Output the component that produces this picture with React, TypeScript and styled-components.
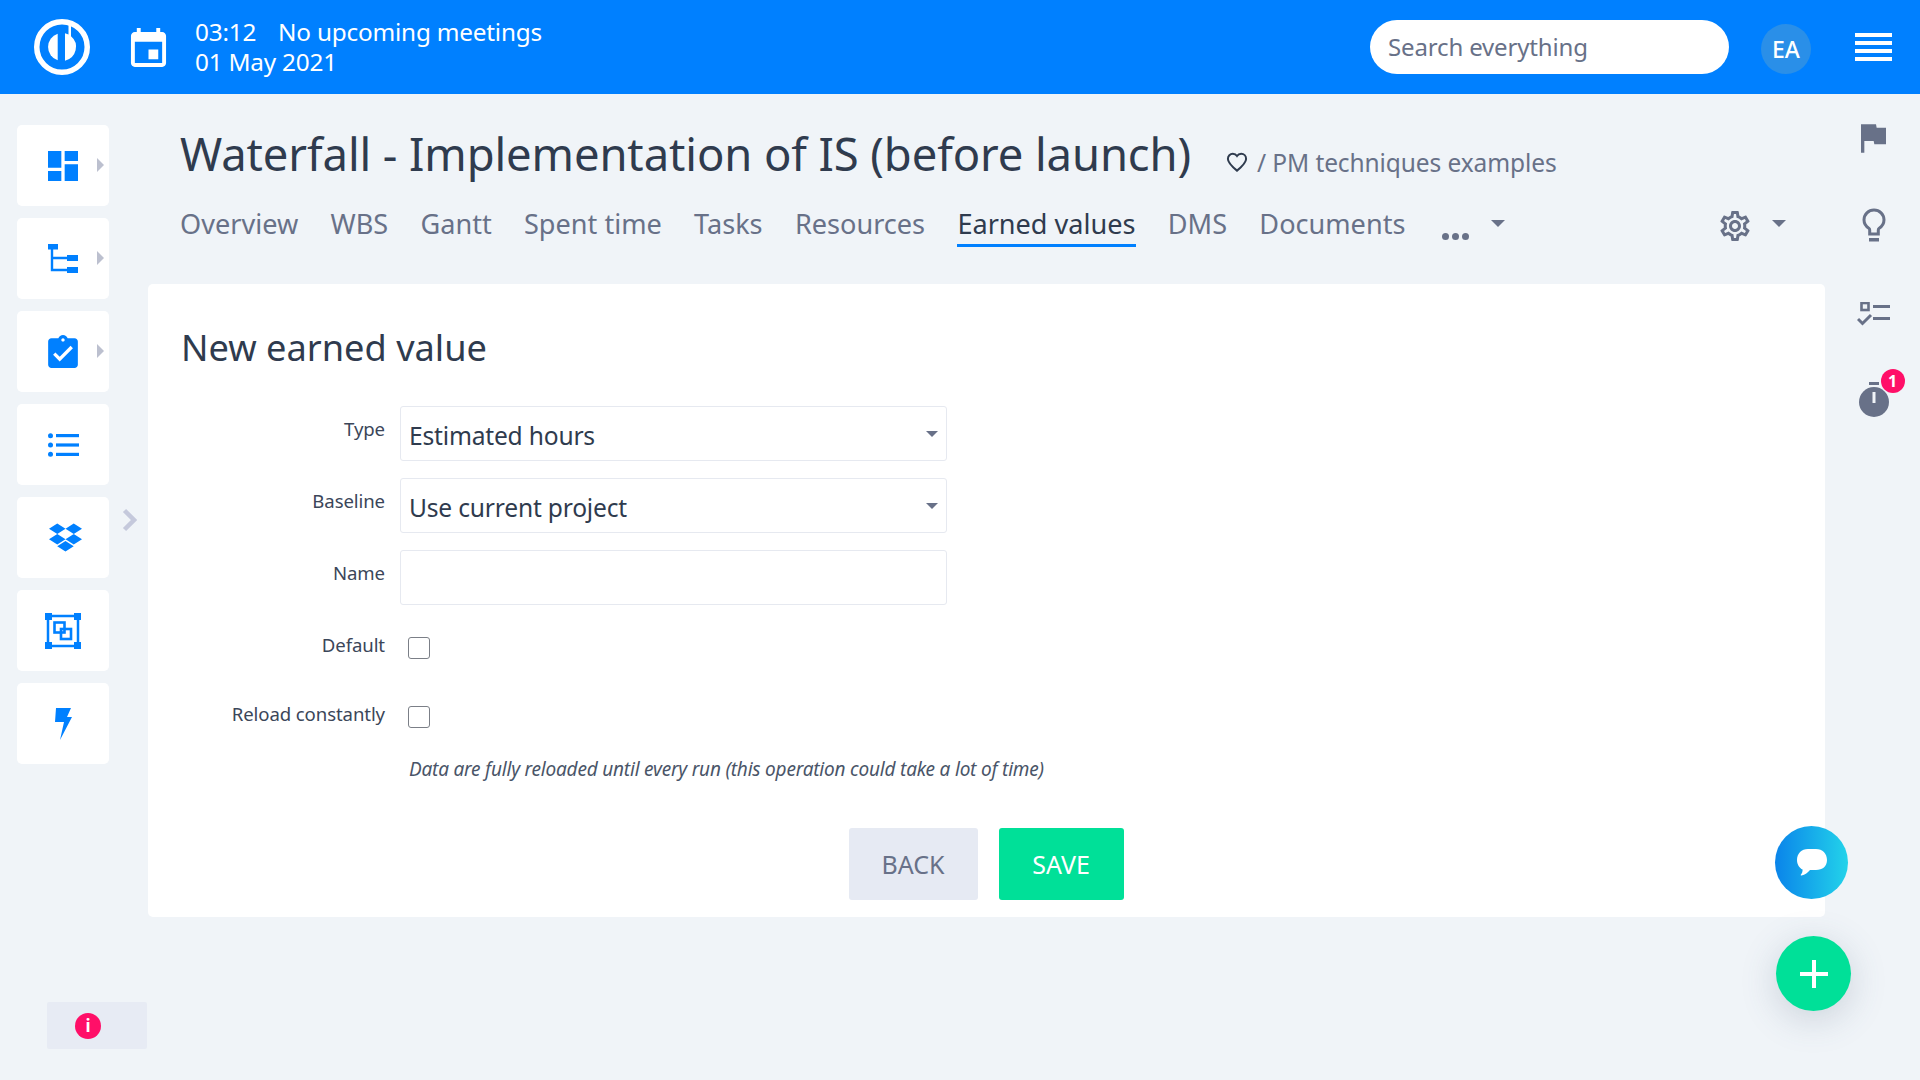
import React from "react";
import styled, { createGlobalStyle } from "styled-components";
import { FaDropbox } from "react-icons/fa";

const BLUE = "#0080ff";
const GREY = "#687188";
const INK = "#2f3b4e";
const GREEN = "#00e098";
const PINK = "#ff0f68";
const FONT = `"Noto Sans", "Open Sans", sans-serif`;

const GlobalStyle = createGlobalStyle`
  html, body {
    margin: 0;
    padding: 0;
    background: #f0f4f8;
    font-family: ${FONT};
  }
  * { box-sizing: border-box; }
`;

const Page = styled.div`
  position: relative;
  width: 1920px;
  height: 1080px;
  overflow: hidden;
  background: #f0f4f8;
`;

/* top bar */
const TopBar = styled.header`
  height: 94px;
  background: ${BLUE};
  display: flex;
  align-items: center;
  padding: 0 28px 0 34px;
  color: #fff;
`;

const Logo = styled.svg`
  width: 56px;
  height: 56px;
  flex: none;
`;

const CalendarIcon = styled.svg`
  width: 37px;
  height: 39px;
  margin-left: 40px;
  flex: none;
  fill: #fff;
`;

const Clock = styled.div`
  margin-left: 28px;
  font-size: 24.3px;
  line-height: 30px;
  letter-spacing: -0.2px;
`;

const ClockLine = styled.div`
  display: flex;
  gap: 22px;
`;

const SearchBox = styled.div`
  width: 359px;
  height: 54px;
  margin-left: auto;
  border-radius: 27px;
  background: #fff;
  display: flex;
  align-items: center;
  padding: 0 0 2px 18px;
  font-size: 24px;
  letter-spacing: -0.15px;
  color: ${GREY};
`;

const Avatar = styled.div`
  width: 50px;
  height: 50px;
  margin: 4px 0 0 32px;
  border-radius: 50%;
  background: #2a8fe8;
  display: flex;
  align-items: center;
  justify-content: center;
  font-size: 23px;
  font-weight: 500;
`;

const Burger = styled.div`
  width: 37px;
  height: 28px;
  margin-left: 44px;
  display: flex;
  flex-direction: column;
  justify-content: space-between;
`;

const BurgerLine = styled.span`
  height: 4px;
  background: #fff;
`;

/* body */
const Body = styled.div`
  display: flex;
  height: 986px;
`;

const SideBar = styled.nav`
  width: 148px;
  flex: none;
  padding: 31px 0 0 17px;
  display: flex;
  flex-direction: column;
  gap: 12px;
`;

const SideCard = styled.div`
  position: relative;
  width: 92px;
  height: 81px;
  border-radius: 5px;
  background: #fff;
  display: flex;
  align-items: center;
  justify-content: center;
  padding-left: ${(p) => p.$shift ?? 0}px;
  color: ${BLUE};
  fill: ${BLUE};
`;

const SideArrow = styled.span`
  position: absolute;
  right: 5px;
  top: 33px;
  width: 0;
  height: 0;
  border-top: 7.5px solid transparent;
  border-bottom: 7.5px solid transparent;
  border-left: 7px solid #bcc0cf;
`;

const Collapse = styled.svg`
  position: absolute;
  left: 122px;
  top: 508px;
  width: 15px;
  height: 24px;
`;

const InfoBadge = styled.div`
  margin-top: auto;
  margin-bottom: 31px;
  margin-left: 30px;
  width: 100px;
  height: 47px;
  background: #e7ebf4;
  border-radius: 2px;
  display: flex;
  align-items: center;
  padding-left: 28px;
`;

const InfoDot = styled.span`
  width: 26px;
  height: 26px;
  border-radius: 50%;
  background: ${PINK};
  color: #fff;
  display: flex;
  align-items: center;
  justify-content: center;
  font-size: 17px;
  font-weight: 700;
  line-height: 1;
`;

const Main = styled.main`
  width: 1677px;
  flex: none;
`;

const TitleRow = styled.div`
  height: 74px;
  margin-top: 22px;
  padding-left: 32px;
  display: flex;
  align-items: center;
`;

const Title = styled.h1`
  margin: 0;
  font-size: 45.4px;
  font-weight: 400;
  letter-spacing: -0.1px;
  color: ${INK};
  white-space: nowrap;
`;

const HeartIcon = styled.svg`
  width: 22px;
  height: 20px;
  margin: 18px 0 0 35px;
  flex: none;
`;

const Crumb = styled.span`
  margin: 18px 0 0 9px;
  font-size: 24.5px;
  letter-spacing: -0.1px;
  color: ${GREY};
`;

const Tabs = styled.div`
  height: 75px;
  margin-top: 11px;
  padding-left: 32px;
  display: flex;
  align-items: flex-start;
`;

const Tab = styled.a`
  height: 46px;
  margin-right: 32.3px;
  padding-top: 5px;
  font-size: 27.1px;
  line-height: 36px;
  white-space: nowrap;
  color: ${(p) => (p.$active ? INK : GREY)};
  border-bottom: 3px solid ${(p) => (p.$active ? BLUE : "transparent")};
`;

const Dots = styled.div`
  display: flex;
  gap: 3px;
  margin: 32px 0 0 4px;
`;

const Dot = styled.span`
  width: 7px;
  height: 7px;
  border-radius: 50%;
  background: ${GREY};
`;

const Caret = styled.span`
  width: 0;
  height: 0;
  flex: none;
  border-left: 7px solid transparent;
  border-right: 7px solid transparent;
  border-top: 7px solid ${GREY};
  margin-left: ${(p) => p.$left}px;
  margin-top: 19px;
`;

const GearIcon = styled.svg`
  width: 36px;
  height: 36px;
  margin: 7px 0 0 ${(p) => p.$left}px;
  flex: none;
  fill: ${GREY};
`;

const Card = styled.section`
  height: 633px;
  margin-top: 8px;
  padding: 35px 32px 0 33px;
  background: #fff;
  border-radius: 5px;
`;

const Heading = styled.h2`
  margin: 0 0 31px;
  height: 56px;
  line-height: 56px;
  font-size: 36.2px;
  font-weight: 400;
  color: ${INK};
`;

const Row = styled.div`
  display: flex;
  height: ${(p) => p.$h}px;
`;

const Label = styled.label`
  width: 204px;
  flex: none;
  padding-top: ${(p) => p.$top}px;
  text-align: right;
  font-size: 18.6px;
  line-height: 26px;
  letter-spacing: -0.1px;
  color: #3b4659;
`;

const Field = styled.div`
  position: relative;
  width: 547px;
  height: 55px;
  margin-left: 15px;
  border: 1px solid #e6e9f0;
  border-radius: 3px;
  background: #fff;
  padding: 12px 0 0 8px;
  font-size: 24.6px;
  line-height: 34px;
  letter-spacing: -0.2px;
  color: ${INK};
`;

const SelectCaret = styled.span`
  position: absolute;
  right: 8px;
  top: 24px;
  width: 0;
  height: 0;
  border-left: 6px solid transparent;
  border-right: 6px solid transparent;
  border-top: 6px solid ${GREY};
`;

const Check = styled.input`
  appearance: none;
  width: 22px;
  height: 22px;
  margin: ${(p) => p.$top}px 0 0 23px;
  border: 1.5px solid #7b7f87;
  border-radius: 3px;
  background: #fff;
`;

const Hint = styled.p`
  margin: 0 0 0 228px;
  font-size: 19px;
  line-height: 26px;
  font-style: italic;
  letter-spacing: -0.2px;
  color: #4a5568;
`;

const Actions = styled.div`
  display: flex;
  justify-content: center;
  gap: 21px;
  margin-top: 46px;
  padding-right: 2px;
`;

const Button = styled.button`
  height: 72px;
  width: ${(p) => p.$w}px;
  border: 0;
  border-radius: 3px;
  font-family: ${FONT};
  font-size: 25px;
  background: ${(p) => (p.$primary ? GREEN : "#e6eaf3")};
  color: ${(p) => (p.$primary ? "#fff" : GREY)};
`;

/* right rail */
const Rail = styled.aside`
  flex: 1;
  display: flex;
  flex-direction: column;
  align-items: center;
  padding: 30px 0 0 2px;
  fill: ${GREY};
`;

const RailSlot = styled.div`
  position: relative;
  height: ${(p) => p.$h}px;
  display: flex;
  align-items: flex-start;
  justify-content: center;
  width: 60px;
`;

const CountBadge = styled.span`
  position: absolute;
  left: 37px;
  top: -13px;
  width: 24px;
  height: 24px;
  border-radius: 50%;
  background: ${PINK};
  color: #fff;
  font-size: 16px;
  font-weight: 700;
  display: flex;
  align-items: center;
  justify-content: center;
`;

/* floating buttons */
const Fab = styled.div`
  position: absolute;
  border-radius: 50%;
  display: flex;
  align-items: center;
  justify-content: center;
`;

const ChatFab = styled(Fab)`
  left: 1775px;
  top: 826px;
  width: 73px;
  height: 73px;
  background: linear-gradient(90deg, #0a84ea, #23d3ea);
`;

const AddFab = styled(Fab)`
  left: 1776px;
  top: 936px;
  width: 75px;
  height: 75px;
  background: ${GREEN};
  box-shadow: 0 8px 36px rgba(70, 90, 120, 0.22);
`;

const DASHBOARD = "M3 13h8V3H3v10zm0 8h8v-6H3v6zm10 0h8V11h-8v10zm0-18v6h8V3h-8z";
const CLIPBOARD =
  "M19 3h-4.18C14.4 1.84 13.3 1 12 1c-1.3 0-2.4.84-2.82 2H5c-1.1 0-2 .9-2 2v14c0 1.1.9 2 2 2h14c1.1 0 2-.9 2-2V5c0-1.1-.9-2-2-2zm-7 0c.55 0 1 .45 1 1s-.45 1-1 1-1-.45-1-1 .45-1 1-1zm-2 14l-4-4 1.41-1.41L10 14.17l6.59-6.59L18 9l-8 8z";
const CALENDAR =
  "M17 12h-5v5h5v-5zM16 1v2H8V1H6v2H5c-1.11 0-1.99.9-1.99 2L3 19c0 1.1.89 2 2 2h14c1.1 0 2-.9 2-2V5c0-1.1-.9-2-2-2h-1V1h-2zm3 18H5V8h14v11z";
const GEAR =
  "M19.43 12.98c.04-.32.07-.64.07-.98 0-.34-.03-.66-.07-.98l2.11-1.65c.19-.15.24-.42.12-.64l-2-3.46c-.09-.16-.26-.25-.44-.25-.06 0-.12.01-.17.03l-2.49 1c-.52-.4-1.08-.73-1.69-.98l-.38-2.65C14.46 2.18 14.25 2 14 2h-4c-.25 0-.46.18-.49.42l-.38 2.65c-.61.25-1.17.59-1.69.98l-2.49-1c-.06-.02-.12-.03-.18-.03-.17 0-.34.09-.43.25l-2 3.46c-.13.22-.07.49.12.64l2.11 1.65c-.04.32-.07.65-.07.98 0 .33.03.66.07.98l-2.11 1.65c-.19.15-.24.42-.12.64l2 3.46c.09.16.26.25.44.25.06 0 .12-.01.17-.03l2.49-1c.52.4 1.08.73 1.69.98l.38 2.65c.03.24.24.42.49.42h4c.25 0 .46-.18.49-.42l.38-2.65c.61-.25 1.17-.59 1.69-.98l2.49 1c.06.02.12.03.18.03.17 0 .34-.09.43-.25l2-3.46c.12-.22.07-.49-.12-.64l-2.11-1.65zm-1.98-1.71c.04.31.05.52.05.73 0 .21-.02.43-.05.73l-.14 1.13.89.7 1.08.84-.7 1.21-1.27-.51-1.04-.42-.9.68c-.43.32-.84.56-1.25.73l-1.06.43-.16 1.13-.2 1.35h-1.4l-.19-1.35-.16-1.13-1.06-.43c-.43-.18-.83-.41-1.23-.71l-.91-.7-1.06.43-1.27.51-.7-1.21 1.08-.84.89-.7-.14-1.13c-.03-.31-.05-.54-.05-.74s.02-.43.05-.73l.14-1.13-.89-.7-1.08-.84.7-1.21 1.27.51 1.04.42.9-.68c.43-.32.84-.56 1.25-.73l1.06-.43.16-1.13.2-1.35h1.39l.19 1.35.16 1.13 1.06.43c.43.18.83.41 1.23.71l.91.7 1.06-.43 1.27-.51.7 1.21-1.07.85-.89.7.14 1.13zM12 8c-2.21 0-4 1.79-4 4s1.79 4 4 4 4-1.79 4-4-1.79-4-4-4zm0 6c-1.1 0-2-.9-2-2s.9-2 2-2 2 .9 2 2-.9 2-2 2z";

const TABS = ["Overview", "WBS", "Gantt", "Spent time", "Tasks", "Resources", "Earned values", "DMS", "Documents"];

export default function App() {
  return (
    <Page>
      <GlobalStyle />
      <TopBar>
        <Logo viewBox="0 0 56 56">
          <circle cx="28" cy="28" r="25.25" fill="none" stroke="#fff" strokeWidth="5.5" />
          <path d="M23.7 14.7A14 14 0 0 0 23.7 41.3z" fill="#fff" />
          <path d="M31 41.700A14 14 0 0 0 37 17.300V5h-2.500V15.500L31 14.300z" fill="#fff" />
        </Logo>
        <CalendarIcon viewBox="3 1 18 20">
          <path d={CALENDAR} />
        </CalendarIcon>
        <Clock>
          <ClockLine>
            <span>03:12</span>
            <span>No upcoming meetings</span>
          </ClockLine>
          <div>01 May 2021</div>
        </Clock>
        <SearchBox>Search everything</SearchBox>
        <Avatar>EA</Avatar>
        <Burger>
          <BurgerLine />
          <BurgerLine />
          <BurgerLine />
          <BurgerLine />
        </Burger>
      </TopBar>

      <Body>
        <SideBar>
          <SideCard>
            <svg width="30" height="30" viewBox="3 3 18 18">
              <path d={DASHBOARD} />
            </svg>
            <SideArrow />
          </SideCard>
          <SideCard>
            <svg width="30" height="29" viewBox="0 0 30 29">
              <rect x="0" y="0" width="10" height="5.500" />
              <rect x="19" y="11" width="11" height="6" />
              <rect x="19" y="23" width="11" height="6" />
              <path d="M4 5v21h15M4 14h15" fill="none" stroke={BLUE} strokeWidth="2.400" />
            </svg>
            <SideArrow />
          </SideCard>
          <SideCard>
            <svg width="30" height="33" viewBox="3 1 18 20">
              <path d={CLIPBOARD} />
            </svg>
            <SideArrow />
          </SideCard>
          <SideCard>
            <svg width="31" height="24" viewBox="0 0 31 24">
              <circle cx="2.500" cy="2.700" r="2.500" />
              <circle cx="2.500" cy="12" r="2.500" />
              <circle cx="2.500" cy="21.300" r="2.500" />
              <rect x="8" y="1" width="23" height="3.200" />
              <rect x="8" y="10.400" width="23" height="3.200" />
              <rect x="8" y="19.800" width="23" height="3.200" />
            </svg>
          </SideCard>
          <SideCard $shift={4}>
            <FaDropbox size={33} />
          </SideCard>
          <SideCard>
            <svg width="36" height="36" viewBox="0 0 36 36">
              <rect x="3" y="3" width="30" height="30" fill="none" stroke={BLUE} strokeWidth="2.500" />
              <rect x="0" y="0" width="7" height="7" />
              <rect x="29" y="0" width="7" height="7" />
              <rect x="0" y="29" width="7" height="7" />
              <rect x="29" y="29" width="7" height="7" />
              <rect x="9.500" y="9.500" width="10" height="10" fill="none" stroke={BLUE} strokeWidth="2.600" />
              <rect x="16" y="16" width="10" height="10" fill="none" stroke={BLUE} strokeWidth="2.600" />
            </svg>
          </SideCard>
          <SideCard>
            <svg width="17" height="32" viewBox="0 0 17 32">
              <path d="M1 0h15l-4 9h5L5 32l4-18H0z" />
            </svg>
          </SideCard>
          <InfoBadge>
            <InfoDot>i</InfoDot>
          </InfoBadge>
        </SideBar>

        <Main>
          <TitleRow>
            <Title>Waterfall - Implementation of IS (before launch)</Title>
            <HeartIcon viewBox="0 0 24 22">
              <path
                d="M12 20.500C5.500 15 2 11.600 2 7.600 2 4.400 4.400 2 7.400 2c1.900 0 3.600.9 4.600 2.400C13 2.900 14.700 2 16.600 2 19.600 2 22 4.400 22 7.600c0 4-3.500 7.400-10 12.900z"
                fill="none"
                stroke={INK}
                strokeWidth="2.200"
              />
            </HeartIcon>
            <Crumb>/ PM techniques examples</Crumb>
          </TitleRow>
          <Tabs>
            {TABS.map((tab) => (
              <Tab key={tab} $active={tab === "Earned values"}>
                {tab}
              </Tab>
            ))}
            <Dots>
              <Dot />
              <Dot />
              <Dot />
            </Dots>
            <Caret $left={22} />
            <GearIcon $left={212} viewBox="0 0 24 24">
              <path d={GEAR} />
            </GearIcon>
            <Caret $left={19} />
          </Tabs>
          <Card>
            <Heading>New earned value</Heading>
            <Row $h={72}>
              <Label $top={10}>Type</Label>
              <Field>
                Estimated hours
                <SelectCaret />
              </Field>
            </Row>
            <Row $h={72}>
              <Label $top={10}>Baseline</Label>
              <Field>
                Use current project
                <SelectCaret />
              </Field>
            </Row>
            <Row $h={82}>
              <Label $top={10}>Name</Label>
              <Field />
            </Row>
            <Row $h={69}>
              <Label $top={0}>Default</Label>
              <Check type="checkbox" $top={5} />
            </Row>
            <Row $h={55}>
              <Label $top={0}>Reload constantly</Label>
              <Check type="checkbox" $top={5} />
            </Row>
            <Hint>Data are fully reloaded until every run (this operation could take a lot of time)</Hint>
            <Actions>
              <Button $w={129}>BACK</Button>
              <Button $w={125} $primary>
                SAVE
              </Button>
            </Actions>
          </Card>
        </Main>

        <Rail>
          <RailSlot $h={84}>
            <svg width="26" height="29" viewBox="5 4 15.600 17">
              <path d="M14.400 6L14 4H5v17h2v-7h5.600l.4 2h7V6z" />
            </svg>
          </RailSlot>
          <RailSlot $h={94}>
            <svg width="24" height="34" viewBox="0 0 24 34">
              <path
                d="M12 2C6.500 2 2 6.400 2 11.800c0 3.600 1.900 6.600 4.800 8.400.6.4.9 1 .9 1.700V26h8.600v-4.100c0-.7.3-1.300.9-1.700 2.900-1.800 4.800-4.800 4.800-8.400C22 6.400 17.500 2 12 2z"
                fill="none"
                stroke={GREY}
                strokeWidth="3"
              />
              <rect x="7" y="30" width="10" height="3.500" />
            </svg>
          </RailSlot>
          <RailSlot $h={80}>
            <svg width="34" height="25" viewBox="0 0 34 25">
              <rect x="4.500" y="1" width="7" height="7" fill="none" stroke={GREY} strokeWidth="2.600" />
              <rect x="16" y="3" width="17" height="3" />
              <rect x="16" y="15" width="17" height="3" />
              <path d="M1 17l4.500 4.500L14 13" fill="none" stroke={GREY} strokeWidth="3" />
            </svg>
          </RailSlot>
          <RailSlot $h={40}>
            <svg width="30" height="36" viewBox="0 0 30 36">
              <rect x="10" y="0" width="10" height="3" />
              <circle cx="15" cy="20" r="15" />
              <rect x="13.500" y="10" width="3" height="11" fill="#f0f4f8" />
            </svg>
            <CountBadge>1</CountBadge>
          </RailSlot>
        </Rail>
      </Body>

      <Collapse viewBox="0 0 15 24">
        <path d="M2.500 2.500L12 12l-9.500 9.500" fill="none" stroke="#c5c9dc" strokeWidth="4.500" />
      </Collapse>

      <ChatFab>
        <svg width="30" height="28" viewBox="0 0 30 28">
          <path
            d="M11 0h8c6.500 0 11 4.500 11 11s-4.500 10-11 10h-6c-2 2.500-5 5-8.500 5.500-.8 0-1-.6-.5-1 1-1 1.600-2.700 1.600-4.900C2.500 19 0 15.500 0 11 0 4.500 4.500 0 11 0z"
            fill="#fff"
          />
        </svg>
      </ChatFab>
      <AddFab>
        <svg width="28" height="28" viewBox="0 0 28 28">
          <rect x="12" y="0" width="4" height="28" fill="#fff" />
          <rect x="0" y="12" width="28" height="4" fill="#fff" />
        </svg>
      </AddFab>
    </Page>
  );
}
